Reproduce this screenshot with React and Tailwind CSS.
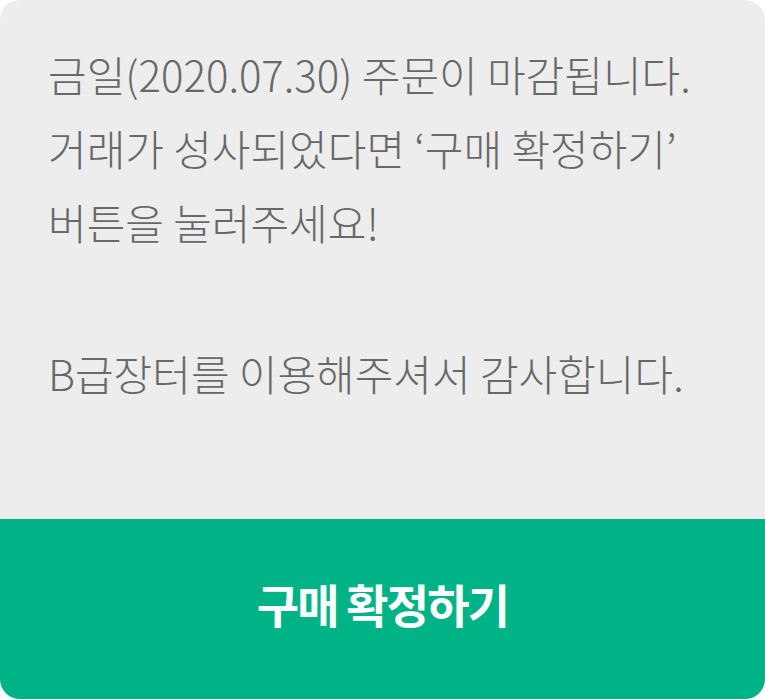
export default function App() {
  return (
    <div
      className="w-[765px] h-[699px] rounded-[20px] overflow-hidden bg-[#ededed] flex flex-col"
      style={{ fontFamily: '"Noto Sans CJK KR", "Noto Sans", sans-serif' }}
    >
      {/* Message */}
      <div className="h-[519px] pl-[48px] pt-[37px] text-[#686868] text-[42px] font-light leading-[74px]">
        <p>금일(2020.07.30) 주문이 마감됩니다.</p>
        <p>거래가 성사되었다면 ‘구매 확정하기’</p>
        <p>버튼을 눌러주세요!</p>
        <p className="mt-[77px]">B급장터를 이용해주셔서 감사합니다.</p>
      </div>

      {/* Confirm button */}
      <button className="flex-1 bg-[#00b386] flex items-center justify-center pb-[12px] text-white text-[46px] font-bold tracking-[-0.04em]">
        구매 확정하기
      </button>
    </div>
  );
}
